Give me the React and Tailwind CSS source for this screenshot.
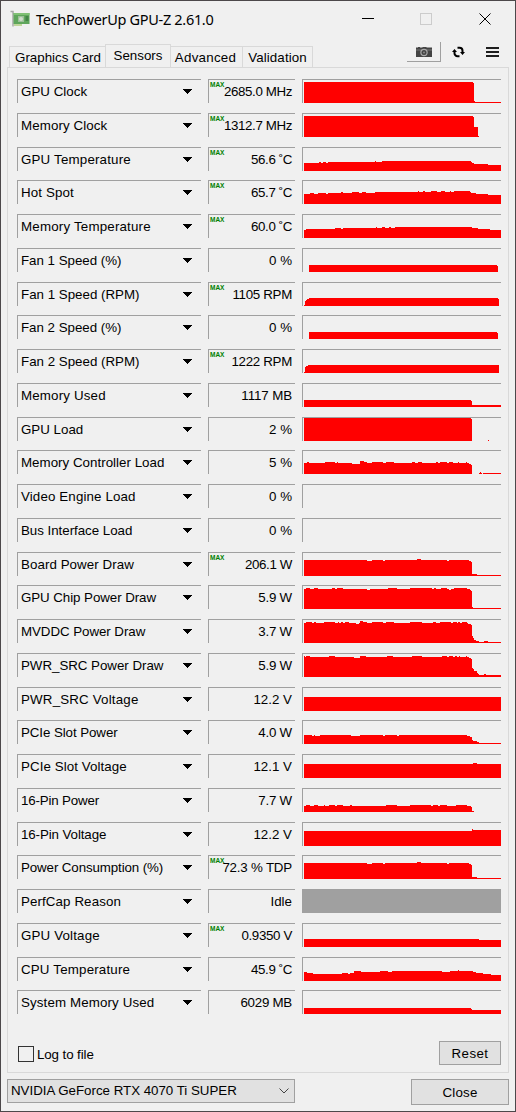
import React, { useState } from "react";
import clsx from "clsx";

const power = [[0,16],[63,15],[68,16],[79,15],[81,16],[113,17],[117,16],[143,15],[145,16],[165,15],[167,14],[168,2],[173,1]];
const fanPercent = [[0,0],[5,7],[193,6],[194,0]];

// history: [start column, bar height] pairs, each level holds until the next one
const sensors = [
  { name: "GPU Clock", value: "2685.0 MHz", max: true, nameClass: "tracking-[0.03px]", valueClass: "tracking-[-0.38px]", history: [[0,21],[169,20],[170,2],[171,1]] },
  { name: "Memory Clock", value: "1312.7 MHz", max: true, nameClass: "tracking-[0.1px]", valueClass: "tracking-[-0.38px]", history: [[0,21],[169,20],[170,10],[174,1],[175,0]] },
  { name: "GPU Temperature", value: "56.6 ˚C", max: true, nameClass: "tracking-[0.18px]", valueClass: "tracking-[-0.4px]", history: [[0,8],[15,9],[17,8],[19,9],[22,8],[24,9],[71,10],[72,9],[78,10],[167,9],[168,8],[170,7],[184,6]] },
  { name: "Hot Spot", value: "65.7 ˚C", max: true, nameClass: "tracking-[0.12px]", valueClass: "tracking-[-0.4px]", history: [[0,10],[6,11],[10,10],[14,11],[22,10],[24,11],[37,12],[39,11],[48,12],[55,11],[58,12],[62,11],[71,12],[114,13],[115,12],[119,13],[121,12],[127,13],[133,12],[137,13],[141,12],[146,13],[147,12],[150,13],[166,12],[167,11],[172,10],[184,9]] },
  { name: "Memory Temperature", value: "60.0 ˚C", max: true, nameClass: "tracking-[0.19px]", valueClass: "tracking-[-0.4px]", history: [[0,8],[2,9],[31,10],[37,9],[39,10],[72,11],[73,10],[78,11],[81,10],[85,11],[87,10],[91,11],[168,10],[174,9],[186,8]] },
  { name: "Fan 1 Speed (%)", value: "0 %", nameClass: "tracking-[-0.02px]", history: fanPercent },
  { name: "Fan 1 Speed (RPM)", value: "1105 RPM", max: true, valueClass: "tracking-[-0.3px]", history: [[0,1],[1,5],[2,6],[3,7],[5,8],[194,7],[195,0]] },
  { name: "Fan 2 Speed (%)", value: "0 %", nameClass: "tracking-[-0.02px]", history: fanPercent },
  { name: "Fan 2 Speed (RPM)", value: "1222 RPM", max: true, valueClass: "tracking-[-0.3px]", history: [[0,1],[1,6],[2,7],[4,8],[195,0]] },
  { name: "Memory Used", value: "1117 MB", nameClass: "tracking-[0.16px]", valueClass: "tracking-[-0.1px]", history: [[0,7],[167,6],[168,2]] },
  { name: "GPU Load", value: "2 %", history: [[0,23],[167,22],[168,0],[184,1],[185,0]] },
  { name: "Memory Controller Load", value: "5 %", nameClass: "tracking-[0.02px]", history: [[0,11],[3,12],[5,11],[21,12],[31,11],[33,12],[34,11],[48,10],[56,13],[60,12],[63,11],[68,12],[79,11],[82,12],[90,11],[108,12],[111,11],[114,12],[118,11],[132,12],[134,11],[136,12],[143,11],[145,12],[149,11],[154,12],[155,11],[162,12],[163,11],[165,10],[167,9],[168,0],[175,1],[176,2],[177,1],[178,0],[179,1]] },
  { name: "Video Engine Load", value: "0 %", nameClass: "tracking-[0.13px]", history: [] },
  { name: "Bus Interface Load", value: "0 %", nameClass: "tracking-[-0.03px]", history: [] },
  { name: "Board Power Draw", value: "206.1 W", max: true, nameClass: "tracking-[0.06px]", valueClass: "tracking-[-0.38px]", history: power },
  { name: "GPU Chip Power Draw", value: "5.9 W", nameClass: "tracking-[-0.07px]", valueClass: "tracking-[-0.2px]", history: [[0,20],[2,21],[6,20],[10,21],[14,20],[28,21],[31,20],[33,21],[39,20],[63,19],[66,20],[84,21],[93,20],[106,21],[128,20],[130,21],[132,20],[137,21],[143,20],[145,19],[147,20],[150,21],[163,20],[166,19],[167,18],[168,2],[169,1]] },
  { name: "MVDDC Power Draw", value: "3.7 W", nameClass: "tracking-[-0.06px]", valueClass: "tracking-[-0.2px]", history: [[0,20],[2,21],[8,20],[10,21],[12,20],[20,21],[31,20],[34,21],[35,20],[37,21],[39,20],[41,21],[45,20],[52,19],[55,20],[56,22],[59,21],[63,20],[68,21],[79,20],[82,21],[90,20],[106,21],[118,20],[129,21],[132,20],[136,21],[147,20],[149,21],[153,20],[154,21],[156,20],[158,21],[163,20],[164,19],[167,18],[168,7],[169,5],[170,3],[172,2],[175,1],[180,2],[184,1]] },
  { name: "PWR_SRC Power Draw", value: "5.9 W", nameClass: "tracking-[-0.03px]", valueClass: "tracking-[-0.2px]", history: [[0,21],[1,20],[2,21],[6,20],[25,21],[31,20],[50,19],[56,21],[62,20],[83,21],[89,20],[108,21],[118,20],[138,21],[143,20],[145,21],[149,20],[151,21],[153,20],[155,21],[156,20],[162,21],[163,20],[165,19],[167,18],[168,9],[169,8],[170,6],[173,4],[174,3],[175,2],[180,3],[182,2]] },
  { name: "PWR_SRC Voltage", value: "12.2 V", nameClass: "tracking-[0.18px]", history: [[0,14]] },
  { name: "PCIe Slot Power", value: "4.0 W", nameClass: "tracking-[-0.08px]", valueClass: "tracking-[-0.2px]", history: [[0,9],[8,8],[10,9],[11,8],[16,9],[47,8],[56,9],[79,8],[81,9],[93,8],[95,9],[163,8],[166,7],[168,4],[169,3],[173,2],[175,1]] },
  { name: "PCIe Slot Voltage", value: "12.1 V", nameClass: "tracking-[0.07px]", history: [[0,14],[169,15],[173,14]] },
  { name: "16-Pin Power", value: "7.7 W", nameClass: "tracking-[-0.17px]", valueClass: "tracking-[-0.2px]", history: [[0,6],[2,7],[6,6],[10,7],[14,6],[20,7],[21,6],[25,7],[31,6],[33,7],[39,6],[46,7],[48,6],[82,7],[93,6],[106,7],[127,6],[129,7],[134,6],[136,7],[143,6],[152,7],[163,6],[167,5],[168,1],[170,0]] },
  { name: "16-Pin Voltage", value: "12.2 V", nameClass: "tracking-[-0.1px]", history: [[0,15],[168,17],[169,16]] },
  { name: "Power Consumption (%)", value: "72.3 % TDP", max: true, nameClass: "tracking-[-0.11px]", valueClass: "tracking-[-0.2px]", history: power },
  { name: "PerfCap Reason", value: "Idle", idle: true, nameClass: "tracking-[0.1px]", history: [] },
  { name: "GPU Voltage", value: "0.9350 V", max: true, nameClass: "tracking-[0.16px]", valueClass: "tracking-[-0.35px]", history: [[0,8],[175,7]] },
  { name: "CPU Temperature", value: "45.9 ˚C", nameClass: "tracking-[0.18px]", valueClass: "tracking-[-0.4px]", history: [[0,9],[3,8],[9,7],[38,8],[44,7],[46,8],[50,10],[57,9],[76,10],[84,9],[88,10],[138,9],[146,10],[154,11],[155,10],[169,9],[172,8],[179,7],[187,6]] },
  { name: "System Memory Used", value: "6029 MB", nameClass: "tracking-[0.12px]", valueClass: "tracking-[-0.25px]", history: [[0,6],[167,5],[168,4]] },
];

const Graph = ({ history }) => {
  if (!history.length) return null;
  const steps = history.map(([x, h]) => `H${x}V${23 - h}`).join("");
  return (
    <svg width="197" height="23" className="ml-px block" shapeRendering="crispEdges">
      <path d={`M0 23${steps}H197V23Z`} fill="#ff0000" />
    </svg>
  );
};

const SensorRow = ({ name, value, max, idle, history, nameClass, valueClass, short }) => (
  <div className={clsx("flex h-6 shrink-0", short ? "mb-[9px]" : "mb-[10px]")}>
    <button className="flex w-[184px] items-center justify-between border-l border-t border-[#a0a0a0] pl-[3px] pr-[9px] text-left">
      <span className={nameClass}>{name}</span>
      <svg width="9" height="5" viewBox="0 0 9 5" shapeRendering="crispEdges"><path d="M0 0h9v1H8v1H7v1H6v1H5v1H4V4H3V3H2V2H1V1H0z" /></svg>
    </button>
    <div className="relative ml-[7px] flex w-[87px] items-center justify-end border-l border-t border-[#a0a0a0] pr-[3px]">
      {max && <span className="absolute left-px top-[1px] text-[6.5px] font-bold leading-[8px] text-[#008000]">MAX</span>}
      <span className={valueClass}>{value}</span>
    </div>
    <div className={clsx("ml-[7px] w-[199px] border-l border-t border-[#a0a0a0]", idle && "bg-[#a0a0a0]")}>
      <Graph history={history} />
    </div>
  </div>
);

const TitleBar = () => (
  <div className="flex h-[43px] shrink-0 items-start pl-[9px]">
    <svg width="20" height="18" viewBox="0 0 20 18" className="mt-[9px]">
      <path d="M.5 1.500h2.500v15" fill="none" stroke="#a8a8a8" strokeWidth="1.5" />
      <path d="M3.500 3H19.500v11H3.500z" fill="#5fa65c" />
      <path d="M3.500 3H19.500v2H3.500z" fill="#80c075" />
      <path d="M4 14h8v2H4z" fill="#bfd79a" />
      <path d="M8 6h6v6H8z" fill="#9cbf98" />
      <circle cx="11" cy="9" r="2" fill="#cfdccd" />
      <path d="M15.500 6h3v5h-3z" fill="#438447" />
    </svg>
    <h1 className="ml-[6px] mt-[7px] font-['Noto_Sans'] text-[14.5px] leading-[22px] tracking-[-0.31px]">TechPowerUp GPU-Z 2.61.0</h1>
    <svg width="130" height="14" viewBox="0 0 130 14" fill="none" className="ml-auto mr-[23px] mt-[11px]" shapeRendering="crispEdges">
      <path d="M0 6.5h12" stroke="#000" />
      <path d="M58.5 1.5h11v11h-11z" stroke="#ccc" />
      <path d="M117.5 1.5l11 11M128.5 1.5l-11 11" stroke="#000" shapeRendering="auto" />
    </svg>
  </div>
);

const Tab = ({ active, className, children }) => (
  <button className={clsx("shrink-0 whitespace-nowrap border border-b-0 border-[#d9d9d9] bg-[#f0f0f0]", active ? "-mb-px h-6 pb-[1px]" : "h-[21px] pt-[2px]", className)}>{children}</button>
);

const Toolbar = () => (
  <div className="mb-[5px] ml-auto flex items-center">
    <button className="flex h-5 w-[34px] items-center justify-center border-b border-r border-[#a0a0a0] pt-[1px]">
      <svg width="16" height="10" viewBox="0 0 16 10">
        <path d="M1 .5h1V0h2v.5h2L7 0h3l1 .5h5V10H0V.5z" fill="#444" />
        <path d="M0 2.500h16v1H0z" fill="#777" />
        <circle cx="8" cy="5.5" r="3.7" fill="#aaa" />
        <circle cx="8" cy="5.5" r="2.5" fill="#444" />
        <circle cx="8" cy="5.5" r="1" fill="#888" />
      </svg>
    </button>
    <svg width="13" height="12" viewBox="0 0 13 12" className="ml-[11px]" fill="none" stroke="#000" strokeWidth="2">
      <path d="M5.5 1.8h2a3 3 0 0 1 3 3V7M7.5 10.2h-2a3 3 0 0 1-3-3V5" />
      <path d="M8 6h5l-2.500 3zM0 6h5L2.500 3z" fill="#000" stroke="none" />
    </svg>
    <svg width="13" height="10" viewBox="0 0 13 10" className="ml-[21px]" shapeRendering="crispEdges">
      <path d="M0 0h13v2H0zM0 4h13v2H0zM0 8h13v2H0z" fill="#1e1e1e" />
    </svg>
  </div>
);

const App = () => {
  const [logging, setLogging] = useState(false);

  return (
    <div className="flex h-[1112px] w-[516px] flex-col border border-[#4c484a] bg-[#f0f0f0] font-['Liberation_Sans',sans-serif] text-[13.33px] leading-4 text-black">
      <TitleBar />
      <div className="flex h-[23px] shrink-0 items-end pl-[8px] pr-[16px]">
        <Tab className="w-[97px] pl-[1px]">Graphics Card</Tab>
        <Tab active className="-ml-px w-[66px]">Sensors</Tab>
        <Tab className="-ml-px w-[73px] pr-[2px] tracking-[0.25px]">Advanced</Tab>
        <Tab className="-ml-px w-[71px] tracking-[0.1px]">Validation</Tab>
        <Toolbar />
      </div>
      <div className="ml-[6px] flex h-[1006px] w-[502px] shrink-0 flex-col border border-[#d9d9d9] pl-[9px] pt-[11px]">
        {sensors.map((s, i) => (
          <SensorRow key={s.name} {...s} short={i % 4 === 2} />
        ))}
        <div className="mt-[17px] flex items-start">
          <label className="mt-[4px] flex items-center gap-[3px]">
            <input type="checkbox" checked={logging} onChange={(e) => setLogging(e.target.checked)} className="ml-[1px] size-4 appearance-none border border-[#333] bg-[#f0f0f0] checked:bg-[#333]" />
            <span className="pt-[2px] tracking-[-0.1px]">Log to file</span>
          </label>
          <button className="ml-auto mr-[7px] h-6 w-[62px] border border-[#a0a0a0] bg-[#e1e1e1] pt-[1px] tracking-[0.4px]">Reset</button>
        </div>
      </div>
      <div className="mt-[6px] flex items-start pl-[6px] pr-[6px]">
        <button className="flex h-6 w-[288px] items-center justify-between border border-[#a0a0a0] bg-[#e1e1e1] pl-[3px] pr-[5px]">
          <span className="tracking-[-0.02px]">NVIDIA GeForce RTX 4070 Ti SUPER</span>
          <svg width="10" height="6" viewBox="0 0 10 6" fill="none" stroke="#444"><path d="M.5.5L5 5 9.500.5" /></svg>
        </button>
        <button className="ml-auto h-[26px] w-[98px] border border-[#a0a0a0] bg-[#e1e1e1] pt-[1px] tracking-[0.2px]">Close</button>
      </div>
    </div>
  );
};

export default App;
